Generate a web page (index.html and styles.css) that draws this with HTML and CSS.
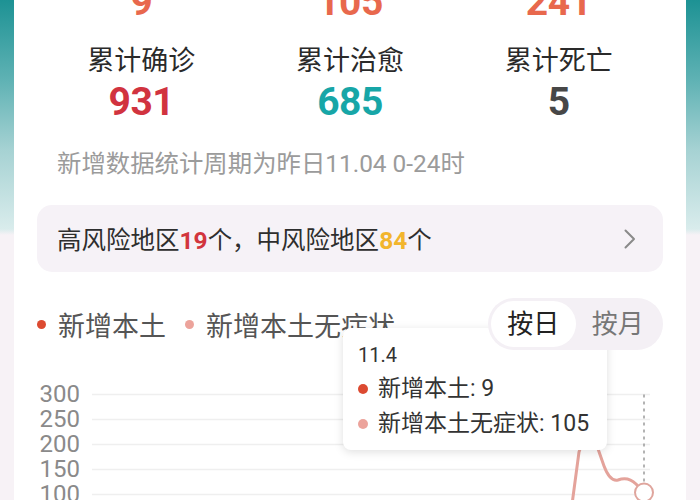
FILE: index.html
```html
<!DOCTYPE html>
<html lang="zh-CN">
<head>
<meta charset="utf-8">
<title>疫情数据</title>
<link rel="stylesheet" href="styles.css">
</head>
<body>
<div class="page">
  <div class="card">
    <div class="stats top-row">
      <div class="num orange">9</div>
      <div class="num orange">105</div>
      <div class="num orange">241</div>
    </div>
    <div class="stats labels">
      <div>累计确诊</div>
      <div>累计治愈</div>
      <div>累计死亡</div>
    </div>
    <div class="stats totals">
      <div class="num red">931</div>
      <div class="num teal">685</div>
      <div class="num gray">5</div>
    </div>
    <p class="note">新增数据统计周期为昨日11.04 0-24时</p>
    <div class="risk">
      <span>高风险地区<b class="hi">19</b>个，中风险地区<b class="mid">84</b>个</span>
      <svg class="chev" width="12" height="20" viewBox="0 0 12 20"><polyline points="1.5,1.5 10,10 1.5,18.5" fill="none" stroke="#8a8a8a" stroke-width="2" stroke-linecap="round" stroke-linejoin="round"/></svg>
    </div>
    <div class="trend">
      <div class="chart-head">
        <div class="legend">
          <span class="item"><i class="dot d1"></i>新增本土</span>
          <span class="item"><i class="dot d2"></i>新增本土无症状</span>
        </div>
        <div class="toggle"><span class="opt on">按日</span><span class="opt">按月</span></div>
      </div>
      <div class="chart">
        <div class="yaxis">
          <span>300</span><span>250</span><span>200</span><span>150</span><span>100</span>
        </div>
        <svg class="plot" width="571" height="130" viewBox="0 0 571 130">
          <g stroke="#efefef" stroke-width="1.5">
            <line x1="0" y1="12.5" x2="558" y2="12.5"/>
            <line x1="0" y1="37.5" x2="558" y2="37.5"/>
            <line x1="0" y1="62.5" x2="558" y2="62.5"/>
            <line x1="0" y1="87.5" x2="558" y2="87.5"/>
            <line x1="0" y1="112.5" x2="558" y2="112.5"/>
          </g>
          <line x1="552" y1="12.5" x2="552" y2="130" stroke="#9a9a9a" stroke-width="1.5" stroke-dasharray="3 4"/>
          <path d="M479 130 L487 70 L496 45 L505 64 L512 84 Q518 100 526 98 Q536 94 544 102 L552 110.5" fill="none" stroke="#e4a39b" stroke-width="3" stroke-linejoin="round"/>
          <circle cx="552" cy="110.5" r="9" fill="#fff" stroke="#dfa59d" stroke-width="2"/>
        </svg>
      </div>
      <div class="tooltip">
        <div class="tt-date">11.4</div>
        <div class="tt-row"><i class="dot d1"></i>新增本土: 9</div>
        <div class="tt-row"><i class="dot d2"></i>新增本土无症状: 105</div>
      </div>
    </div>
  </div>
</div>
</body>
</html>
```

FILE: styles.css
```css
html, body {
  margin: 0;
  padding: 0;
}
body {
  width: 700px;
  height: 500px;
  overflow: hidden;
  font-family: Roboto, "Noto Sans CJK SC", sans-serif;
  color: #2b2b2b;
}
.page {
  display: flow-root;
  height: 500px;
  padding: 0 14px;
  box-sizing: border-box;
  background: linear-gradient(180deg, #1d9294 0px, #5fb2b4 80px, #a6d2d3 150px, #d9ecec 229px, #f7f2f6 235px, #f7f2f6 100%);
}
.card {
  background: #fff;
  margin-top: -18px;
  padding: 0 23px;
  height: 560px;
}
.stats {
  display: grid;
  grid-template-columns: 1fr 1fr 1fr;
  text-align: center;
}
.num {
  font-family: Roboto, "Noto Sans CJK SC", sans-serif;
  font-weight: 700;
  font-size: 39px;
  line-height: 40px;
  letter-spacing: -0.5px;
}
.orange { color: #e8684d; }
.red { color: #d1333f; }
.teal { color: #17a6a7; }
.gray { color: #474747; }
.labels {
  margin-top: 22px;
  font-size: 27px;
  line-height: 34px;
  color: #2a2a2a;
}
.totals {
  margin-top: 2px;
}
.totals .num {
  line-height: 44px;
}
.note {
  margin: 24px 0 0;
  padding-left: 20px;
  font-size: 24.4px;
  line-height: 32px;
  color: #9b9b9b;
}
.risk {
  margin-top: 25px;
  height: 67px;
  border-radius: 15px;
  background: #f6f2f7;
  display: flex;
  align-items: center;
  justify-content: space-between;
  padding: 0 27px 0 20px;
  font-size: 24.5px;
  color: #2e2e2e;
}
.risk b {
  font-family: Roboto, sans-serif;
  font-weight: 700;
}
.hi { color: #d2353d; }
.mid { color: #f2b52d; }
.trend {
  position: relative;
  margin-top: 26px;
}
.chart-head {
  display: flex;
  justify-content: space-between;
  align-items: center;
  height: 52px;
}
.legend {
  display: flex;
  gap: 19px;
  font-size: 27px;
  color: #555;
}
.item {
  display: flex;
  align-items: center;
  gap: 12px;
}
.dot {
  display: inline-block;
  width: 9px;
  height: 9px;
  border-radius: 50%;
}
.d1 { background: #dc4a31; }
.d2 { background: #eca39b; }
.toggle {
  position: relative;
  z-index: 3;
  display: flex;
  align-items: center;
  width: 175px;
  height: 52px;
  box-sizing: border-box;
  padding: 3px;
  border-radius: 26px;
  background: #f4f0f5;
  font-size: 26px;
}
.opt {
  flex: 1;
  height: 46px;
  line-height: 46px;
  text-align: center;
  border-radius: 23px;
  color: #777;
}
.opt.on {
  background: #fff;
  color: #222;
}
.chart {
  display: flex;
  margin-top: 32px;
  gap: 12px;
}
.yaxis {
  display: flex;
  flex-direction: column;
  width: 43px;
  text-align: right;
  font-size: 24px;
  line-height: 25px;
  color: #8a8a8a;
}
.plot {
  display: block;
}
.tooltip {
  position: absolute;
  z-index: 2;
  left: 306px;
  top: 30px;
  width: 264px;
  height: 122px;
  box-sizing: border-box;
  padding: 15px 14px 0 15px;
  background: #fff;
  border-radius: 8px;
  box-shadow: 0 2px 10px rgba(0, 0, 0, 0.13);
  color: #333;
}
.tt-date {
  font-size: 20px;
  line-height: 24px;
}
.tt-row {
  display: flex;
  align-items: center;
  gap: 10px;
  margin-top: 9px;
  font-size: 23px;
  line-height: 26px;
}
.tt-row .dot {
  width: 10px;
  height: 10px;
}
```
